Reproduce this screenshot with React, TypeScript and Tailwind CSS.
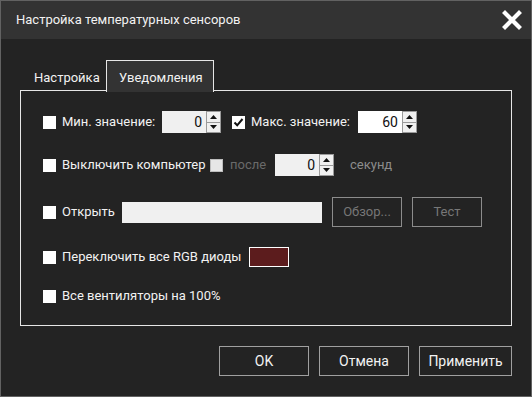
const font = { fontFamily: 'Roboto, "Noto Sans", "Liberation Sans", sans-serif' };

function CheckBox({ checked = false, disabled = false }: { checked?: boolean; disabled?: boolean }) {
  return (
    <div
      className={`w-[13px] h-[13px] shrink-0 flex items-center justify-center ${
        disabled ? "bg-[#e6e6e6] border border-[#bdbdbd]" : "bg-white"
      }`}
    >
      {checked && (
        <svg width="11" height="11" viewBox="0 0 11 11">
          <path d="M1.5 5.5 L4.2 8.3 L9.5 2" stroke="#111" strokeWidth="2" fill="none" />
        </svg>
      )}
    </div>
  );
}

function SpinBox({ value, light = false }: { value: string; light?: boolean }) {
  return (
    <div className="flex h-[22px] w-[59px] shrink-0">
      <div
        className={`flex-1 flex items-center justify-end pr-[4px] text-[14px] text-[#111] ${
          light ? "bg-white" : "bg-[#f0f0f0]"
        }`}
      >
        {value}
      </div>
      <div className="w-[15px] flex flex-col border border-[#9a9a9a] bg-[#f0f0f0]">
        <div className="flex-1 flex items-center justify-center border-b border-[#9a9a9a]">
          <svg width="7" height="4" viewBox="0 0 7 4">
            <path d="M0 4 L3.5 0 L7 4 Z" fill="#111" />
          </svg>
        </div>
        <div className="flex-1 flex items-center justify-center">
          <svg width="7" height="4" viewBox="0 0 7 4">
            <path d="M0 0 L3.5 4 L7 0 Z" fill="#111" />
          </svg>
        </div>
      </div>
    </div>
  );
}

export default function App() {
  return (
    <div
      className="w-[532px] h-[397px] border border-[#626262] bg-[#232323] flex flex-col text-[#f2f2f2]"
      style={font}
    >
      {/* title bar */}
      <div className="h-[38px] bg-[#333333] flex items-center justify-between pl-[15px] pr-[9px] shrink-0">
        <span className="text-[13px]">Настройка температурных сенсоров</span>
        <svg width="20" height="20" viewBox="0 0 20 20">
          <path d="M3 3 L17 17 M17 3 L3 17" stroke="#fff" strokeWidth="4.2" strokeLinecap="square" />
        </svg>
      </div>

      <div className="flex-1 flex flex-col pt-[21px] pl-[19px] pr-[19px]">
        {/* tabs */}
        <div className="flex h-[31px] text-[13px] relative z-10 -mb-px">
          <div className="w-[86px] flex items-center pl-[14px] pt-[4px]">Настройка</div>
          <div className="w-[108px] h-[32px] bg-[#333333] border-t border-x border-[#e6e6e6] flex items-center pl-[12px] pt-[2px]">
            Уведомления
          </div>
        </div>

        {/* panel */}
        <div className="border border-[#e6e6e6] h-[236px] flex flex-col pl-[22px] pt-[20px] text-[13px]">
          <div className="flex items-center h-[22px]">
            <CheckBox />
            <span className="w-[106px] pl-[6px]">Мин. значение:</span>
            <SpinBox value="0" />
            <div className="ml-[11px]">
              <CheckBox checked />
            </div>
            <span className="w-[113px] pl-[6px]">Макс. значение:</span>
            <SpinBox value="60" light />
          </div>

          <div className="flex items-center h-[22px] mt-[21px]">
            <CheckBox />
            <span className="w-[154px] pl-[6px]">Выключить компьютер</span>
            <CheckBox disabled />
            <span className="w-[52px] pl-[7px] text-[#6a6a6a]">после</span>
            <SpinBox value="0" />
            <span className="pl-[16px] text-[#8c8c8c]">секунд</span>
          </div>

          <div className="flex items-center h-[30px] mt-[21px]">
            <CheckBox />
            <span className="w-[66px] pl-[6px]">Открыть</span>
            <div className="w-[200px] h-[21px] bg-[#f0f0f0]" />
            <div className="ml-[10px] w-[70px] h-[30px] border border-[#8c8c8c] flex items-center justify-center text-[#777777]">
              Обзор...
            </div>
            <div className="ml-[10px] w-[70px] h-[30px] border border-[#8c8c8c] flex items-center justify-center text-[#777777]">
              Тест
            </div>
          </div>

          <div className="flex items-center h-[22px] mt-[19px]">
            <CheckBox />
            <span className="w-[193px] pl-[6px]">Переключить все RGB диоды</span>
            <div className="w-[40px] h-[20px] bg-[#5c1c1d] border border-white" />
          </div>

          <div className="flex items-center h-[22px] mt-[17px]">
            <CheckBox />
            <span className="pl-[6px]">Все вентиляторы на 100%</span>
          </div>
        </div>

        {/* buttons */}
        <div className="flex justify-end gap-[10px] mt-[20px] text-[14px]">
          <div className="w-[90px] h-[30px] border border-[#a0a0a0] flex items-center justify-center">OK</div>
          <div className="w-[90px] h-[30px] border border-[#a0a0a0] flex items-center justify-center">Отмена</div>
          <div className="w-[93px] h-[30px] border border-[#a0a0a0] flex items-center justify-center">Применить</div>
        </div>
      </div>
    </div>
  );
}
